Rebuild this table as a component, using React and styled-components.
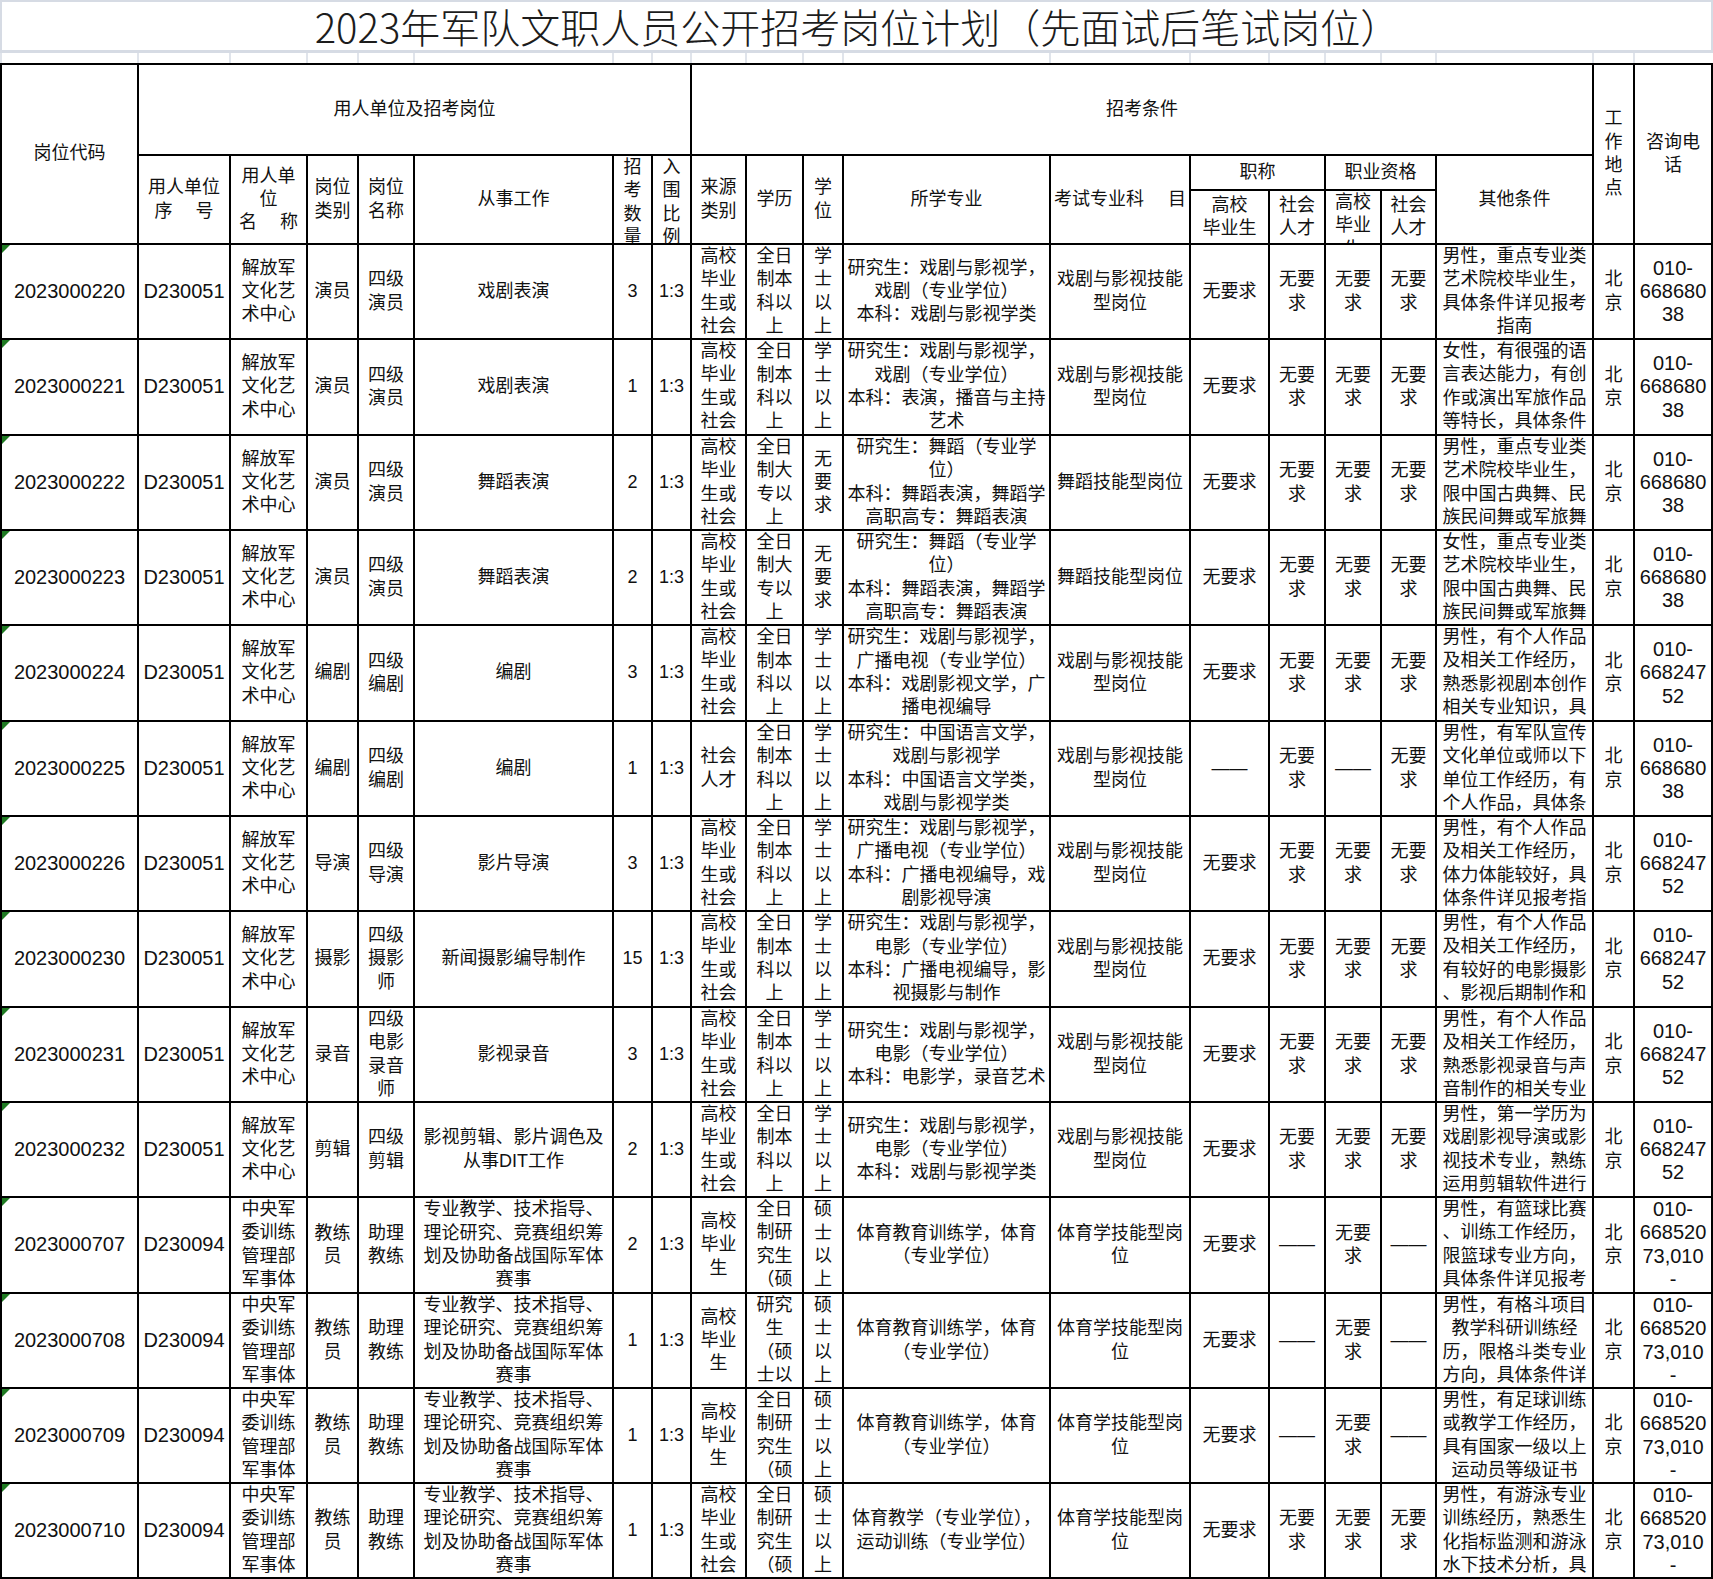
import React from "react";
import styled, { createGlobalStyle } from "styled-components";

// column widths in px (between the 2px grid lines)
const COLS = [135, 90, 75, 49, 54, 197, 37, 37, 53, 55, 38, 205, 138, 77, 54, 54, 53, 155, 39, 76];
// full column pitch, used by the light spreadsheet grid above the table
const PITCH = [137, 92, 77, 51, 56, 199, 39, 39, 55, 57, 40, 207, 140, 79, 56, 56, 55, 157, 41, 80];
const ROW_H = [93, 94, 93, 93, 94, 93, 93, 94, 93, 93, 94, 93, 93, 93];

const GlobalStyle = createGlobalStyle`
  html, body {
    margin: 0;
    padding: 0;
    background: #fff;
  }
  body {
    font-family: "Liberation Sans", "Noto Sans CJK SC", sans-serif;
    color: #111;
  }
`;

const Page = styled.div`
  width: 1713px;
`;

const TitleBand = styled.div`
  height: 53px;
  box-sizing: border-box;
  border: 2px solid #d6dbe4;
  border-bottom-width: 3px;
  display: flex;
  align-items: center;
  justify-content: center;
  font-family: "Noto Sans CJK SC", sans-serif;
  font-weight: 300;
  font-size: 40px;
  color: #1c1c1c;
  padding-left: 2px;
`;

const Spacer = styled.div`
  height: 10px;
  display: grid;
  grid-template-columns: ${PITCH.map((w) => w + "px").join(" ")};
`;

const SpacerCell = styled.div`
  border-left: 2px solid #e0e4eb;
`;

const Sheet = styled.div`
  display: grid;
  grid-template-columns: ${COLS.map((w) => w + "px").join(" ")};
  grid-template-rows: 89px 33px 52px ${ROW_H.map((h) => h + "px").join(" ")};
  gap: 2px;
  padding: 2px;
  background: #000;
`;

const Cell = styled.div`
  position: relative;
  background: #fff;
  display: flex;
  flex-direction: column;
  overflow: hidden;
  padding: 0 2px;
  font-size: ${(p) => (p.$num ? "20px" : "18px")};
  line-height: 23.3px;
  text-align: center;
  white-space: pre;
  ${(p) => (p.$row ? `grid-row: ${p.$row} / span ${p.$rs || 1};` : "")}
  ${(p) => (p.$col ? `grid-column: ${p.$col} / span ${p.$cs || 1};` : "")}

  ${(p) =>
    p.$flag &&
    `&::before {
      content: "";
      position: absolute;
      top: 0;
      left: 0;
      border-top: 8px solid #1f7a22;
      border-right: 8px solid transparent;
    }`}
`;

// auto margins centre the text, and fall back to the top when it overflows
const Text = styled.div`
  margin: auto 0;
`;

const Split = styled.div`
  margin: auto 0;
  display: flex;
  justify-content: space-between;
  padding: 0 1px;
`;

const HEAD = [
  { r: 1, c: 1, rs: 3, t: "岗位代码" },
  { r: 1, c: 2, cs: 7, t: "用人单位及招考岗位" },
  { r: 1, c: 9, cs: 10, t: "招考条件" },
  { r: 1, c: 19, rs: 3, t: "工\n作\n地\n点" },
  { r: 1, c: 20, rs: 3, t: "咨询电\n话" },
  { r: 2, c: 2, rs: 2, t: "用人单位\n序　 号" },
  { r: 2, c: 3, rs: 2, t: "用人单\n位\n名 　称" },
  { r: 2, c: 4, rs: 2, t: "岗位\n类别" },
  { r: 2, c: 5, rs: 2, t: "岗位\n名称" },
  { r: 2, c: 6, rs: 2, t: "从事工作" },
  { r: 2, c: 7, rs: 2, t: "招\n考\n数\n量" },
  { r: 2, c: 8, rs: 2, t: "入\n围\n比\n例" },
  { r: 2, c: 9, rs: 2, t: "来源\n类别" },
  { r: 2, c: 10, rs: 2, t: "学历" },
  { r: 2, c: 11, rs: 2, t: "学\n位" },
  { r: 2, c: 12, rs: 2, t: "所学专业" },
  { r: 2, c: 13, rs: 2, split: ["考试专业科", "目"] },
  { r: 2, c: 14, cs: 2, t: "职称" },
  { r: 2, c: 16, cs: 2, t: "职业资格" },
  { r: 2, c: 18, rs: 2, t: "其他条件" },
  { r: 3, c: 14, t: "高校\n毕业生" },
  { r: 3, c: 15, t: "社会\n人才" },
  { r: 3, c: 16, t: "高校\n毕业\n生" },
  { r: 3, c: 17, t: "社会\n人才" },
];

const PLA = "解放军\n文化艺\n术中心";
const CMC = "中央军\n委训练\n管理部\n军事体\n育训练";
const SRC = "高校\n毕业\n生或\n社会\n人才";
const GRAD = "高校\n毕业\n生";
const BK = "全日\n制本\n科以\n上";
const DZ = "全日\n制大\n专以\n上";
const YJS = "全日\n制研\n究生\n（硕\n士）";
const BS = "学\n士\n以\n上";
const SS = "硕\n士\n以\n上";
const NV = "无\n要\n求";
const NR = "无要求";
const N2 = "无要\n求";
const DASH = "——";
const BJ = "北\n京";
const P1 = "010-\n668680\n38";
const P2 = "010-\n668247\n52";
const P3 = "010-\n668520\n73,010\n-\n668520";
const DRAMA = "戏剧与影视技能\n型岗位";
const SPORT = "体育学技能型岗\n位";
const COACH = "专业教学、技术指导、\n理论研究、竞赛组织筹\n划及协助备战国际军体\n赛事";
const DANCE_MAJ = "研究生：舞蹈（专业学\n位）\n本科：舞蹈表演，舞蹈学\n高职高专：舞蹈表演";
const SPORT_MAJ = "体育教育训练学，体育\n（专业学位）";
const DANCE_REQ = "重点专业类\n艺术院校毕业生，\n限中国古典舞、民\n族民间舞或军旅舞\n方向，具体条件";

const ROWS = [
  ["2023000220", "D230051", PLA, "演员", "四级\n演员", "戏剧表演", "3", "1:3", SRC, BK, BS,
    "研究生：戏剧与影视学，\n戏剧（专业学位）\n本科：戏剧与影视学类", DRAMA, NR, N2, N2, N2,
    "男性，重点专业类\n艺术院校毕业生，\n具体条件详见报考\n指南", BJ, P1],
  ["2023000221", "D230051", PLA, "演员", "四级\n演员", "戏剧表演", "1", "1:3", SRC, BK, BS,
    "研究生：戏剧与影视学，\n戏剧（专业学位）\n本科：表演，播音与主持\n艺术", DRAMA, NR, N2, N2, N2,
    "女性，有很强的语\n言表达能力，有创\n作或演出军旅作品\n等特长，具体条件\n详见报考指南", BJ, P1],
  ["2023000222", "D230051", PLA, "演员", "四级\n演员", "舞蹈表演", "2", "1:3", SRC, DZ, NV,
    DANCE_MAJ, "舞蹈技能型岗位", NR, N2, N2, N2, "男性，" + DANCE_REQ, BJ, P1],
  ["2023000223", "D230051", PLA, "演员", "四级\n演员", "舞蹈表演", "2", "1:3", SRC, DZ, NV,
    DANCE_MAJ, "舞蹈技能型岗位", NR, N2, N2, N2, "女性，" + DANCE_REQ, BJ, P1],
  ["2023000224", "D230051", PLA, "编剧", "四级\n编剧", "编剧", "3", "1:3", SRC, BK, BS,
    "研究生：戏剧与影视学，\n广播电视（专业学位）\n本科：戏剧影视文学，广\n播电视编导", DRAMA, NR, N2, N2, N2,
    "男性，有个人作品\n及相关工作经历，\n熟悉影视剧本创作\n相关专业知识，具\n体条件详见报考", BJ, P2],
  ["2023000225", "D230051", PLA, "编剧", "四级\n编剧", "编剧", "1", "1:3", "社会\n人才", BK, BS,
    "研究生：中国语言文学，\n戏剧与影视学\n本科：中国语言文学类，\n戏剧与影视学类", DRAMA, DASH, N2, DASH, N2,
    "男性，有军队宣传\n文化单位或师以下\n单位工作经历，有\n个人作品，具体条\n件详见报考指南", BJ, P1],
  ["2023000226", "D230051", PLA, "导演", "四级\n导演", "影片导演", "3", "1:3", SRC, BK, BS,
    "研究生：戏剧与影视学，\n广播电视（专业学位）\n本科：广播电视编导，戏\n剧影视导演", DRAMA, NR, N2, N2, N2,
    "男性，有个人作品\n及相关工作经历，\n体力体能较好，具\n体条件详见报考指\n南", BJ, P2],
  ["2023000230", "D230051", PLA, "摄影", "四级\n摄影\n师", "新闻摄影编导制作", "15", "1:3", SRC, BK, BS,
    "研究生：戏剧与影视学，\n电影（专业学位）\n本科：广播电视编导，影\n视摄影与制作", DRAMA, NR, N2, N2, N2,
    "男性，有个人作品\n及相关工作经历，\n有较好的电影摄影\n、影视后期制作和\n调色能力", BJ, P2],
  ["2023000231", "D230051", PLA, "录音", "四级\n电影\n录音\n师", "影视录音", "3", "1:3", SRC, BK, BS,
    "研究生：戏剧与影视学，\n电影（专业学位）\n本科：电影学，录音艺术", DRAMA, NR, N2, N2, N2,
    "男性，有个人作品\n及相关工作经历，\n熟悉影视录音与声\n音制作的相关专业\n知识", BJ, P2],
  ["2023000232", "D230051", PLA, "剪辑", "四级\n剪辑", "影视剪辑、影片调色及\n从事DIT工作", "2", "1:3", SRC, BK, BS,
    "研究生：戏剧与影视学，\n电影（专业学位）\n本科：戏剧与影视学类", DRAMA, NR, N2, N2, N2,
    "男性，第一学历为\n戏剧影视导演或影\n视技术专业，熟练\n运用剪辑软件进行\n剪辑", BJ, P2],
  ["2023000707", "D230094", CMC, "教练\n员", "助理\n教练", COACH, "2", "1:3", GRAD, YJS, SS,
    SPORT_MAJ, SPORT, NR, DASH, N2, DASH,
    "男性，有篮球比赛\n、训练工作经历，\n限篮球专业方向，\n具体条件详见报考\n指南", BJ, P3],
  ["2023000708", "D230094", CMC, "教练\n员", "助理\n教练", COACH, "1", "1:3", GRAD, "研究\n生\n（硕\n士以\n上）", SS,
    SPORT_MAJ, SPORT, NR, DASH, N2, DASH,
    "男性，有格斗项目\n教学科研训练经\n历，限格斗类专业\n方向，具体条件详\n见报考指南", BJ, P3],
  ["2023000709", "D230094", CMC, "教练\n员", "助理\n教练", COACH, "1", "1:3", GRAD, YJS, SS,
    SPORT_MAJ, SPORT, NR, DASH, N2, DASH,
    "男性，有足球训练\n或教学工作经历，\n具有国家一级以上\n运动员等级证书\n，具体条件详见", BJ, P3],
  ["2023000710", "D230094", CMC, "教练\n员", "助理\n教练", COACH, "1", "1:3", SRC, YJS, SS,
    "体育教学（专业学位），\n运动训练（专业学位）", SPORT, NR, N2, N2, N2,
    "男性，有游泳专业\n训练经历，熟悉生\n化指标监测和游泳\n水下技术分析，具\n体条件详见报考", BJ, P3],
];

// columns whose text is set a little larger (digits)
const NUM_COLS = new Set([0, 1, 19]);

export default function App() {
  return (
    <Page>
      <GlobalStyle />
      <TitleBand>2023年军队文职人员公开招考岗位计划（先面试后笔试岗位）</TitleBand>
      <Spacer>
        {PITCH.map((_, i) => (
          <SpacerCell key={i} />
        ))}
      </Spacer>
      <Sheet>
        {HEAD.map((h, i) => (
          <Cell key={"h" + i} $row={h.r} $col={h.c} $rs={h.rs} $cs={h.cs}>
            {h.split ? (
              <Split>
                <span>{h.split[0]}</span>
                <span>{h.split[1]}</span>
              </Split>
            ) : (
              <Text>{h.t}</Text>
            )}
          </Cell>
        ))}
        {ROWS.map((row, r) =>
          row.map((v, c) => (
            <Cell key={r + "-" + c} $row={r + 4} $col={c + 1} $num={NUM_COLS.has(c)} $flag={c === 0}>
              <Text>{v}</Text>
            </Cell>
          ))
        )}
      </Sheet>
    </Page>
  );
}
